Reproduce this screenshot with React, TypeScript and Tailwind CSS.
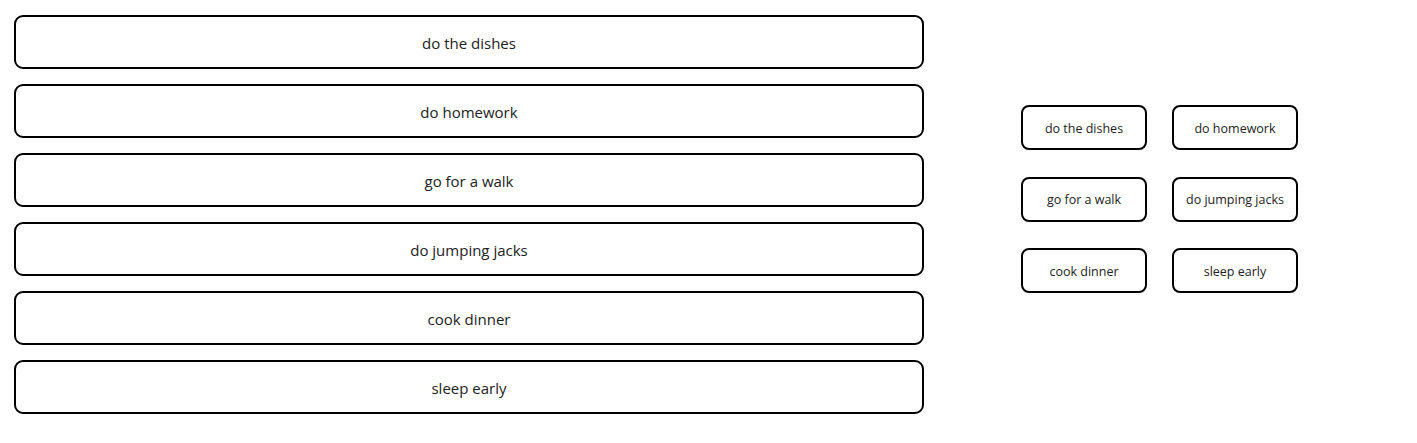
import React from 'react';

const tasks = ['do the dishes', 'do homework', 'go for a walk', 'do jumping jacks', 'cook dinner', 'sleep early'];

const App: React.FC = () => {
  return (
    <div className="w-[1417px] h-[443px] bg-white flex items-start text-[#222] font-['Open_Sans',sans-serif]">
      {/* task list */}
      <div className="flex flex-col gap-[15px] ml-[14px] mt-[15px] w-[910px]">
        {tasks.map((t) => (
          <div
            key={t}
            className="h-[54px] border-2 border-black rounded-[9px] flex items-center justify-center pt-[2px] text-[15px]"
          >
            {t}
          </div>
        ))}
      </div>

      {/* small buttons */}
      <div className="grid grid-cols-[126px_126px] gap-x-[25px] gap-y-[26.5px] ml-[97px] mt-[105px]">
        {tasks.map((t) => (
          <div
            key={t}
            className="h-[45px] border-2 border-black rounded-[8px] flex items-center justify-center pt-[3px] text-[12.5px]"
          >
            {t}
          </div>
        ))}
      </div>
    </div>
  );
};

export default App;
